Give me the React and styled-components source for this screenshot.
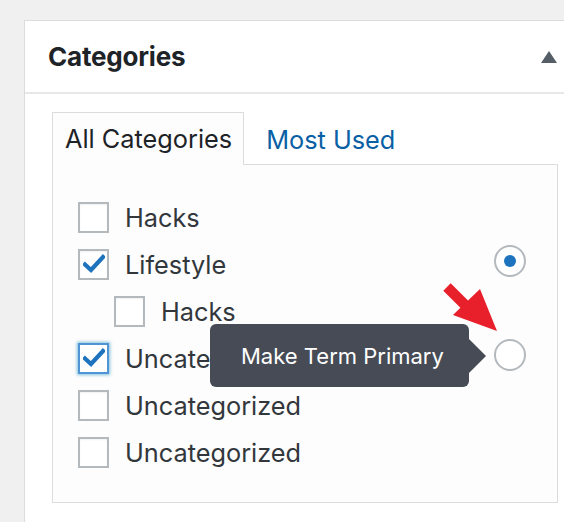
import React from 'react';
import styled, { createGlobalStyle } from 'styled-components';

const GlobalStyle = createGlobalStyle`
  html, body {
    margin: 0;
    padding: 0;
    background: #f0f0f1;
    overflow: hidden;
  }
  body {
    font-family: Inter, "Noto Sans", sans-serif;
    -webkit-font-smoothing: antialiased;
  }
`;

const Page = styled.div`
  padding: 20px 0 0 24px;
  width: 620px;
  height: 522px;
  box-sizing: border-box;
  overflow: hidden;
`;

const Box = styled.section`
  background: #fff;
  border: 1px solid #dcdcde;
  height: 560px;
`;

const BoxHeader = styled.header`
  display: flex;
  align-items: center;
  height: 71px;
  padding: 0 0 0 23px;
  border-bottom: 2px solid #e7e7e8;
`;

const BoxTitle = styled.h2`
  margin: 0;
  flex: 1;
  font-size: 26px;
  font-weight: 700;
  color: #1d2327;
  letter-spacing: -0.2px;
`;

const Toggle = styled.span`
  width: 0;
  height: 0;
  margin-right: 62px;
  border-left: 8px solid transparent;
  border-right: 8px solid transparent;
  border-bottom: 12px solid #555d66;
`;

const BoxBody = styled.div`
  padding: 18px 0 0 27px;
  width: 506px;
`;

const Tabs = styled.ul`
  display: flex;
  align-items: flex-end;
  margin: 0;
  padding: 0;
  list-style: none;
  position: relative;
  z-index: 1;
`;

const Tab = styled.li`
  height: 51px;
  display: flex;
  align-items: center;
  padding: 0 11px 0 ${p => (p.$active ? 12 : 21)}px;
  font-size: 25.3px;
  color: ${p => (p.$active ? '#1d2327' : '#0a5fa5')};
  background: ${p => (p.$active ? '#fdfdfd' : 'transparent')};
  border: 1px solid ${p => (p.$active ? '#dcdcde' : 'transparent')};
  border-bottom: none;
  margin-bottom: -1px;
  padding-bottom: ${p => (p.$active ? 1 : 0)}px;
`;

const TabPanel = styled.div`
  background: #fdfdfd;
  border: 1px solid #dcdcde;
  height: 339px;
  box-sizing: border-box;
  padding: 36px 31px 0 25px;
`;

const List = styled.ul`
  margin: 0;
  padding: 0;
  list-style: none;
  display: flex;
  flex-direction: column;
  gap: 15px;
`;

const Row = styled.li`
  position: relative;
  display: flex;
  align-items: center;
  height: 32px;
  padding-left: ${p => (p.$indent ? 36 : 0)}px;
`;

const Check = styled.span`
  flex: none;
  width: 31px;
  height: 31px;
  box-sizing: border-box;
  border: 2px solid ${p => (p.$focus ? '#4f94d4' : '#b4b9be')};
  box-shadow: ${p => (p.$focus ? '0 0 3px 1px rgba(30,140,190,.55)' : 'inset 0 1px 2px rgba(0,0,0,.06)')};
  background: #fff;
  display: flex;
  align-items: center;
  justify-content: center;
`;

const Label = styled.span`
  margin-left: 16px;
  font-size: 25.3px;
  color: #32373c;
  white-space: nowrap;
`;

const Radio = styled.span`
  margin-left: auto;
  margin-top: -6px;
  flex: none;
  width: 32px;
  height: 32px;
  box-sizing: border-box;
  border-radius: 50%;
  border: 2px solid #b4b9be;
  background: #fff;
  display: flex;
  align-items: center;
  justify-content: center;
  &::after {
    content: '';
    display: ${p => (p.$on ? 'block' : 'none')};
    width: 12px;
    height: 12px;
    border-radius: 50%;
    background: #1e73be;
  }
`;

const Tooltip = styled.div`
  position: absolute;
  left: 132px;
  top: -18px;
  width: 259px;
  height: 63px;
  box-sizing: border-box;
  background: #464b55;
  border-radius: 6px;
  color: #fff;
  font-size: 22px;
  display: flex;
  align-items: center;
  padding-left: 31px;
  white-space: nowrap;
  &::after {
    content: '';
    position: absolute;
    right: -17px;
    top: 50%;
    margin-top: -17px;
    border-top: 17px solid transparent;
    border-bottom: 17px solid transparent;
    border-left: 17px solid #464b55;
  }
`;

const Pointer = styled.svg`
  position: absolute;
  left: 360px;
  top: -64px;
  width: 64px;
  height: 58px;
`;

const CheckMark = () => (
  <svg width="22" height="20" viewBox="0 0 22 20">
    <path d="M2 10.5 L8 16 L20 3" fill="none" stroke="#1e73be" strokeWidth="4.2" strokeLinecap="square" strokeLinejoin="miter" />
  </svg>
);

const items = [
  { label: 'Hacks' },
  { label: 'Lifestyle', checked: true, radio: 'on' },
  { label: 'Hacks', indent: true },
  { label: 'Uncategorized', checked: true, focus: true, radio: 'off', tip: true },
  { label: 'Uncategorized' },
  { label: 'Uncategorized' },
];

export default function App() {
  return (
    <Page>
      <GlobalStyle />
      <Box>
        <BoxHeader>
          <BoxTitle>Categories</BoxTitle>
          <Toggle />
        </BoxHeader>
        <BoxBody>
          <Tabs>
            <Tab $active>All Categories</Tab>
            <Tab>Most Used</Tab>
          </Tabs>
          <TabPanel>
            <List>
              {items.map((it, i) => (
                <Row key={i} $indent={it.indent}>
                  <Check $focus={it.focus}>{it.checked && <CheckMark />}</Check>
                  <Label>{it.label}</Label>
                  {it.radio && <Radio $on={it.radio === 'on'} />}
                  {it.tip && (
                    <>
                      <Tooltip>Make Term Primary</Tooltip>
                      <Pointer viewBox="0 0 64 58">
                        <path d="M5.3 12.7 L12.7 5.3 L30 22.6 L42 11 L59 53 L15 37 L22.4 29.8 Z" fill="#e8202b" />
                      </Pointer>
                    </>
                  )}
                </Row>
              ))}
            </List>
          </TabPanel>
        </BoxBody>
      </Box>
    </Page>
  );
}
